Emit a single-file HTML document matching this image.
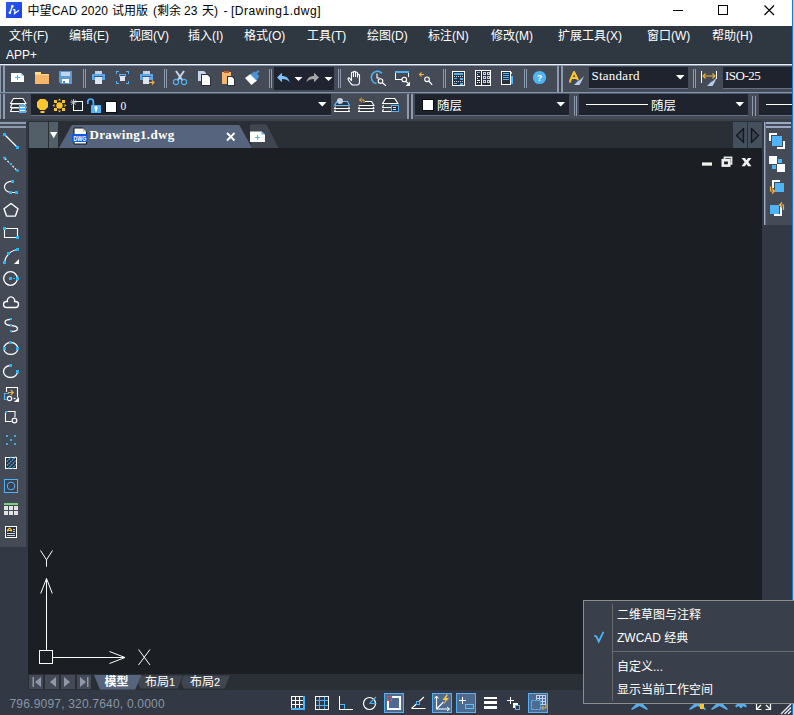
<!DOCTYPE html>
<html lang="zh-CN">
<head>
<meta charset="utf-8">
<title>中望CAD 2020</title>
<style>
html,body{margin:0;padding:0;}
body{width:794px;height:715px;overflow:hidden;position:relative;background:#323944;
 font-family:"Liberation Sans","Noto Sans CJK SC",sans-serif;font-size:12px;color:#fff;}
.a{position:absolute;}
.t{position:absolute;white-space:nowrap;line-height:16px;height:16px;}
svg{position:absolute;overflow:visible;}
#title{left:0;top:0;width:792px;height:26px;background:#fff;}
#title .t{color:#000;top:3px;font-size:12px;}
#menu{left:0;top:26px;width:792px;height:38px;background:#2f3841;}
#menu .t{color:#fff;font-size:12px;}
#tb1,#tb2{left:0;width:792px;height:26px;background:#444b57;}
#tb1{top:66px;}
#tb2{top:94px;height:25px;}
.grip{position:absolute;background:#8d9bb0;}
.sep{position:absolute;width:1px;background:#8d9bb0;top:3px;height:19px;}
.dd{position:absolute;background:#1f232d;border-bottom:1px solid #667283;}
.mono{font-family:"Liberation Serif","Noto Sans CJK SC",serif;}
#draw{left:28px;top:148px;width:734px;height:526px;background:#1b1e23;}
#tabs{left:28px;top:121px;width:734px;height:27px;background:#2a2e35;}
#left{left:0;top:121px;width:26px;height:426px;background:#444b57;}
#right{left:764px;top:122px;width:28px;height:103px;background:#444b57;}
#ltabs{left:28px;top:674px;width:734px;height:16px;background:#2a2e35;}
#status{left:0;top:690px;width:792px;height:25px;background:#323944;}
#popup{left:583px;top:600px;width:211px;height:104px;background:#3a404b;box-sizing:border-box;border:1px solid #8c8c8c;border-right:none;}
#popup .t{color:#fff;font-size:12px;left:33px;}
</style>
</head>
<body>

<!-- window right border -->
<div class="a" style="left:792px;top:0;width:1px;height:715px;background:#1979d6"></div>
<div class="a" style="left:793px;top:0;width:1px;height:715px;background:#d0cac4"></div>

<!-- TITLE BAR -->
<div id="title" class="a">
  <svg style="left:6px;top:2px" width="16" height="16" viewBox="0 0 16 16">
   <defs><linearGradient id="zg" x1="0" y1="0" x2="1" y2="1"><stop offset="0" stop-color="#2a5cf0"/><stop offset="1" stop-color="#1a3fe0"/></linearGradient></defs>
   <rect width="16" height="16" fill="url(#zg)"/>
   <path d="M6.300 4.300l-2.300 6.500" stroke="#fff" stroke-width="1.300" fill="none"/>
   <circle cx="6.300" cy="4.200" r="1.300" fill="#fff"/><circle cx="3.900" cy="10.800" r="1.300" fill="#fff"/>
   <path d="M7 8.200c1-1 2-.8 2 .3l-.5 3.200l4.500-3.500" stroke="#fff" stroke-width="1.200" fill="none"/>
  </svg>
  <div class="t" style="left:27.500px;letter-spacing:.12px">中望CAD 2020</div>
  <div class="t" style="left:112px">试用版</div>
  <div class="t" style="left:153px">(剩余</div>
  <div class="t" style="left:184px">23</div>
  <div class="t" style="left:202px">天)</div>
  <div class="t" style="left:223.500px">-</div>
  <div class="t" style="left:231px;letter-spacing:.52px">[Drawing1.dwg]</div>
  <svg style="left:0;top:0" width="794" height="26" viewBox="0 0 794 26">
   <g stroke="#000" stroke-width="1" fill="none" shape-rendering="crispEdges">
    <path d="M673 10.500h10"/>
    <rect x="718.500" y="5.500" width="9" height="9"/>
   </g>
   <path d="M764.500 5.500l9.500 9.500M774 5.500l-9.500 9.500" stroke="#000" stroke-width="1.200" fill="none"/>
  </svg>
</div>

<!-- MENU BAR -->
<div id="menu" class="a">
  <div class="t" style="left:9px;top:2px">文件(F)</div>
  <div class="t" style="left:69px;top:2px">编辑(E)</div>
  <div class="t" style="left:129px;top:2px">视图(V)</div>
  <div class="t" style="left:188px;top:2px">插入(I)</div>
  <div class="t" style="left:244px;top:2px">格式(O)</div>
  <div class="t" style="left:307px;top:2px">工具(T)</div>
  <div class="t" style="left:367px;top:2px">绘图(D)</div>
  <div class="t" style="left:428px;top:2px">标注(N)</div>
  <div class="t" style="left:491px;top:2px">修改(M)</div>
  <div class="t" style="left:558px;top:2px">扩展工具(X)</div>
  <div class="t" style="left:647px;top:2px">窗口(W)</div>
  <div class="t" style="left:712px;top:2px">帮助(H)</div>
  <div class="t" style="left:6px;top:21px">APP+</div>
</div>
<div class="a" style="left:0;top:63px;width:792px;height:1px;background:#262d36"></div>
<div class="a" style="left:0;top:64px;width:792px;height:1px;background:#eef0f4"></div>
<div class="a" style="left:0;top:65px;width:792px;height:1px;background:#8394ae"></div>

<!-- TOOLBAR ROW 1 -->
<div id="tb1" class="a">
  <div class="grip" style="left:0;top:0;width:1px;height:26px"></div>
  <div class="grip" style="left:3px;top:0;width:2px;height:26px"></div>
  <div class="dd" style="left:589px;top:1px;width:99px;height:21px"></div>
  <div class="dd" style="left:723px;top:1px;width:69px;height:21px"></div>
  <div class="t mono" id="std" style="left:591.500px;top:2px;font-size:13px;letter-spacing:.25px">Standard</div>
  <div class="t mono" id="iso" style="left:725px;top:2px;font-size:13px;letter-spacing:-.5px">ISO-25</div>
</div>
<div class="a" style="left:0;top:92px;width:792px;height:1px;background:#8394ae"></div>
<div class="a" style="left:0;top:93px;width:792px;height:1px;background:#505a69"></div>

<!-- TOOLBAR ROW 2 -->
<div id="tb2" class="a">
  <div class="grip" style="left:0;top:0;width:1px;height:25px"></div>
  <div class="grip" style="left:3px;top:0;width:2px;height:25px"></div>
  <div class="dd" style="left:31px;top:0;width:300px;height:21px"></div>
  <div class="dd" style="left:415px;top:0;width:154px;height:21px"></div>
  <div class="dd" style="left:579px;top:0;width:169px;height:21px"></div>
  <div class="dd" style="left:759px;top:0;width:33px;height:21px"></div>
  <div class="t mono" style="left:120.500px;top:4px;font-size:11.500px">0</div>
  <div class="t" style="left:437px;top:4px;font-size:12.500px">随层</div>
  <div class="t" style="left:651px;top:4px;font-size:12.500px">随层</div>
</div>
<div class="a" style="left:0;top:119px;width:792px;height:3px;background:#3a414b"></div>

<!-- LEFT TOOLBAR -->
<div id="left" class="a">
  <div class="grip" style="left:0;top:1px;width:26px;height:2px"></div>
  <div class="grip" style="left:0;top:5px;width:26px;height:2px"></div>
  <!--LEFTICONS-->
</div>

<!-- DOC TABS -->
<div id="tabs" class="a">
  <!--TABS-->
</div>

<!-- DRAWING AREA -->
<div id="draw" class="a">
  <!--DRAW-->
</div>

<!-- RIGHT TOOLBAR -->
<div id="right" class="a">
  <div class="grip" style="left:0;top:0;width:27px;height:2px;background:#9baac2"></div>
  <div class="grip" style="left:0;top:4px;width:27px;height:2px;background:#9baac2"></div>
  <div class="grip" style="left:0;top:0;width:1px;height:103px;background:#9baac2"></div>
  <div class="grip" style="left:1px;top:0;width:1px;height:103px;background:#66748a"></div>
  <!--RIGHTICONS-->
</div>

<!-- LAYOUT TABS -->
<div id="ltabs" class="a">
  <!--LTABS-->
</div>

<!-- STATUS BAR -->
<div id="status" class="a">
  <div class="t" style="left:9.500px;top:6px;color:#8a95a5;font-size:12px;letter-spacing:.2px">796.9097, 320.7640, 0.0000</div>
  <!--STATUS-->
</div>

<svg class="a" style="left:0;top:0" width="794" height="715" viewBox="0 0 794 715">
<g shape-rendering="crispEdges">
 <!-- separators row1 -->
 <g fill="#8d9bb0">
  <rect x="83" y="69" width="1" height="19"/><rect x="85" y="69" width="1" height="19"/>
  <rect x="164" y="69" width="1" height="19"/><rect x="166" y="69" width="1" height="19"/>
  <rect x="269" y="69" width="1" height="19"/><rect x="271" y="69" width="1" height="19"/>
  <rect x="338" y="69" width="1" height="19"/><rect x="340" y="69" width="1" height="19"/>
  <rect x="443" y="69" width="1" height="19"/><rect x="445" y="69" width="1" height="19"/>
  <rect x="524" y="69" width="1" height="19"/><rect x="526" y="69" width="1" height="19"/>
  <rect x="693" y="69" width="1" height="19"/><rect x="695" y="69" width="1" height="19"/>
  <rect x="557" y="66" width="2" height="26"/><rect x="561" y="66" width="2" height="26"/>
 </g>
 <rect x="559" y="66" width="2" height="26" fill="#3a414b"/>
 <!-- new -->
 <path d="M11 73h10l3 3v6h-13z" fill="#fff" shape-rendering="geometricPrecision"/>
 <path d="M21.500 73.200l2.300 2.300h-2.300z" fill="#6cbcf5" shape-rendering="geometricPrecision"/>
 <rect x="15" y="77" width="5" height="1" fill="#4fb3f7"/><rect x="17" y="75" width="1" height="5" fill="#4fb3f7"/>
 <!-- open -->
 <rect x="35" y="72" width="6" height="3" fill="#fbe08f"/>
 <rect x="35" y="74" width="14" height="10" fill="#f6b66b"/>
 <rect x="35" y="74" width="14" height="1" fill="#fbd78e"/>
 <!-- save -->
 <path d="M59 71h13v13h-11l-2-2z" fill="#5b9bd5" shape-rendering="geometricPrecision"/>
 <rect x="61" y="72" width="9" height="4" fill="#c5d3e8"/>
 <rect x="62" y="79" width="7" height="4" fill="#fff"/>
 <rect x="63" y="81" width="2" height="2" fill="#4a86c8"/>
 <!-- print -->
 <rect x="95" y="71" width="7" height="3" fill="#c9d2e4"/>
 <rect x="92" y="74" width="13" height="6" fill="#5ba7ea"/>
 <rect x="94" y="76" width="9" height="1" fill="#2e5d96"/>
 <rect x="95" y="77" width="7" height="7" fill="#dde5f5"/>
 <!-- preview -->
 <g fill="#5ab0f0">
  <rect x="116" y="71" width="3" height="1"/><rect x="116" y="71" width="1" height="3"/>
  <rect x="126" y="71" width="3" height="1"/><rect x="128" y="71" width="1" height="3"/>
  <rect x="116" y="83" width="3" height="1"/><rect x="116" y="81" width="1" height="3"/>
  <rect x="126" y="83" width="3" height="1"/><rect x="128" y="81" width="1" height="3"/>
 </g>
 <rect x="119" y="74" width="7" height="3" fill="#5ba7ea"/>
 <rect x="120" y="75" width="5" height="1" fill="#2e5d96"/>
 <rect x="120" y="76" width="5" height="5" fill="#dde5f5"/>
 <!-- plot -->
 <rect x="143" y="71" width="7" height="3" fill="#c9d2e4"/>
 <rect x="140" y="74" width="13" height="6" fill="#5ba7ea"/>
 <rect x="142" y="76" width="9" height="1" fill="#2e5d96"/>
 <rect x="143" y="77" width="6" height="7" fill="#dde5f5"/>
 <rect x="149" y="80" width="5" height="5" fill="#444b57"/>
</g>
 <path d="M149 82.5h5M152 80.5l2 2l-2 2" stroke="#f3b13e" stroke-width="1.1" fill="none"/>
 <!-- cut -->
 <path d="M176 71l6.5 9.5M184 71l-6.5 9.5" stroke="#c5d4ea" stroke-width="2" fill="none"/>
 <circle cx="176" cy="82" r="2.6" stroke="#4fb3f7" stroke-width="1.1" fill="none"/>
 <circle cx="184" cy="82" r="2.6" stroke="#4fb3f7" stroke-width="1.1" fill="none"/>
 <!-- copy -->
 <path d="M198 71h6l2 2v8h-8z" fill="#c5d4ea"/>
 <path d="M201 74h7l3 3v9h-10z" fill="#2b313b"/>
 <path d="M202 75h5.5l2.5 2.5v7.500h-8z" fill="#fff"/>
 <path d="M207.500 75l2.500 2.500h-2.500z" fill="#dfe6f3"/>
 <!-- paste -->
 <rect x="222" y="72" width="9" height="12" fill="#f6b66b" shape-rendering="crispEdges"/>
 <rect x="224" y="71" width="5" height="2" fill="#b5652a" shape-rendering="crispEdges"/>
 <path d="M227 76h5.500l2.500 2.500v7.500h-8z" fill="#2b313b"/>
 <path d="M228 77h4l2 2v6h-6z" fill="#fff"/>
 <!-- brush -->
 <path d="M245 78l5.500-4l6.500 6.500l-5.500 4.500z" fill="#fff"/>
 <path d="M250.300 74.300l4.200-3l4.800 5l-2.800 4.200z" fill="#4f92d4"/>
 <path d="M256 73.500l2.800-2.800" stroke="#4f92d4" stroke-width="2" fill="none"/>
 <!-- undo/redo block -->
 <rect x="274" y="67" width="60" height="23" fill="#1f2430" shape-rendering="crispEdges"/>
 <path d="M277 77.500l5-4.800v3.300c4 0 7 2 7.500 6.200c-1.500-2.200-4-3.200-7.500-3.200v3.300z" fill="#7dc4ff"/>
 <path d="M294.500 77h8l-4 4z" fill="#fff"/>
 <path d="M319 77.500l-5-4.800v3.300c-4 0-7 2-7.500 6.200c1.500-2.200 4-3.200 7.500-3.200v3.300z" fill="#a8a8a8"/>
 <path d="M324.500 77h8l-4 4z" fill="#fff"/>
 <!-- pan hand -->
 <path d="M351.500 80.500l-2-2.300q-1.200-.9-1.500.4q0 .9 1 2.400l2.500 3.300q.8.700 2 .700h3.500q2.500 0 2.500-3.500v-6q0-1.200-1-1.200t-1 1.200v-2.500q0-1-1-1t-1 1v-.700q0-1-1-1t-1 1v.700q0-1-1-1t-1 1z" stroke="#fff" stroke-width="1.150" fill="none" stroke-linejoin="round"/>
 <path d="M353.500 73v4M355.500 73v4M357.500 75.500v2" stroke="#fff" stroke-width="1" fill="none"/>
 <!-- zoom realtime -->
 <path d="M382 73.300a6.200 6.200 0 1 0 -5.500 10.300" stroke="#4fb3f7" stroke-width="1.600" fill="none"/>
 <path d="M377 73.500v4.500h2.500" stroke="#fff" stroke-width="1.100" fill="none"/>
 <circle cx="380.500" cy="81" r="2.300" stroke="#fff" stroke-width="1.100" fill="#444b57"/>
 <path d="M382.300 82.800l3.700 3" stroke="#fff" stroke-width="1.200" fill="none"/>
 <!-- zoom window -->
 <rect x="395" y="71" width="14" height="2" fill="#4fb3f7" shape-rendering="crispEdges"/>
 <path d="M395.500 73v6.500h6M408.500 73v4" stroke="#fff" stroke-width="1" fill="none" shape-rendering="crispEdges"/>
 <circle cx="404.300" cy="79.500" r="2.300" stroke="#fff" stroke-width="1.100" fill="#444b57"/>
 <path d="M406 81.300l2 2" stroke="#fff" stroke-width="1.200" fill="none"/>
 <path d="M410 81.500v4.500h-4.500z" fill="#fff"/>
 <!-- zoom prev -->
 <path d="M419.500 74.500h4.500M421.500 72.500l-2 2l2 2" stroke="#f3b13e" stroke-width="1.100" fill="none"/>
 <circle cx="427" cy="79.300" r="2.300" stroke="#fff" stroke-width="1.100" fill="none"/>
 <path d="M428.800 81l3.400 3.800" stroke="#fff" stroke-width="1.200" fill="none"/>
<g shape-rendering="crispEdges">
 <!-- properties -->
 <rect x="452.500" y="71.500" width="12" height="14" fill="#2b313b" stroke="#fff" stroke-width="1"/>
 <rect x="454" y="73" width="9" height="2" fill="#4fb3f7"/>
 <g fill="#c5d4ea"><rect x="454" y="76" width="1" height="1"/><rect x="456" y="76" width="1" height="1"/><rect x="458" y="76" width="1" height="1"/><rect x="460" y="76" width="1" height="1"/><rect x="462" y="76" width="1" height="1"/>
 <rect x="454" y="81" width="1" height="1"/><rect x="456" y="81" width="1" height="1"/><rect x="458" y="81" width="1" height="1"/><rect x="460" y="81" width="1" height="1"/><rect x="462" y="81" width="1" height="1"/></g>
 <rect x="454" y="78" width="3" height="1" fill="#4fb3f7"/><rect x="460" y="78" width="3" height="2" fill="#4fb3f7"/>
 <rect x="454" y="83" width="3" height="1" fill="#4fb3f7"/><rect x="460" y="83" width="3" height="2" fill="#4fb3f7"/>
 <!-- design center -->
 <rect x="475.500" y="70.500" width="15" height="15" fill="#2b313b" stroke="#fff" stroke-width="1"/>
 <rect x="481" y="71" width="1" height="14" fill="#fff"/>
 <rect x="477" y="72" width="3" height="1" fill="#4fb3f7"/>
 <g fill="#fff"><rect x="477" y="74" width="1" height="1"/><rect x="477" y="76" width="3" height="1"/><rect x="477" y="78" width="1" height="1"/><rect x="477" y="80" width="3" height="1"/><rect x="477" y="82" width="1" height="1"/><rect x="479" y="82" width="1" height="1"/></g>
 <g fill="#c5d4ea"><rect x="483" y="72" width="3" height="3"/><rect x="487" y="72" width="3" height="3"/><rect x="483" y="76" width="3" height="3"/><rect x="487" y="76" width="3" height="3"/><rect x="483" y="80" width="3" height="3"/><rect x="487" y="80" width="3" height="3"/></g>
 <g fill="#2b313b"><rect x="484" y="73" width="1" height="1"/><rect x="488" y="73" width="1" height="1"/><rect x="484" y="77" width="1" height="1"/><rect x="488" y="77" width="1" height="1"/><rect x="484" y="81" width="1" height="1"/><rect x="488" y="81" width="1" height="1"/></g>
 <!-- tool palettes -->
 <rect x="501.500" y="71.500" width="9" height="13" fill="#2b313b" stroke="#fff" stroke-width="1"/>
 <rect x="503" y="73" width="6" height="1" fill="#4fb3f7"/><rect x="503" y="75" width="6" height="1" fill="#4fb3f7"/><rect x="503" y="77" width="6" height="1" fill="#4fb3f7"/><rect x="503" y="79" width="6" height="1" fill="#4fb3f7"/>
 <rect x="511" y="76" width="2" height="8" fill="#4fb3f7"/>
 <rect x="511" y="72" width="1" height="2" fill="#c5d4ea"/>
</g>
 <!-- help -->
 <circle cx="539.500" cy="77.500" r="6.600" fill="#4fb3f7"/>
 <text x="539.500" y="81" font-family="Liberation Sans, sans-serif" font-size="9" font-weight="bold" fill="#fff" text-anchor="middle">?</text>
 <!-- text style -->
 <path d="M570 82.500l.3-2l3.700-8.500l4 8M571.500 78h6" stroke="#fdc62f" stroke-width="2" fill="none" stroke-linejoin="round"/>
 <path d="M584 76l-3.500 3.500l-2.500 1.500l-4 4h5.500l2-3.500z" fill="#b5cbe8"/>
 <!-- dim style -->
 <rect x="701" y="71" width="1" height="12" fill="#fff" shape-rendering="crispEdges"/>
 <rect x="716" y="71" width="1" height="8" fill="#fff" shape-rendering="crispEdges"/>
 <path d="M703 76h12M705.500 73.500l-2.500 2.500l2.500 2.500M712.500 73.500l2.500 2.500l-2.500 2.500" stroke="#f3b13e" stroke-width="1.100" fill="none"/>
 <path d="M717 77l-3.500 3.500l-2.500 1.500l-4 4h5.500l2-3.500z" fill="#b5cbe8"/>
</svg>

<svg class="a" style="left:0;top:0" width="794" height="715" viewBox="0 0 794 715">
<g shape-rendering="crispEdges" fill="#8d9bb0">
  <rect x="407" y="94" width="2" height="25"/><rect x="411" y="94" width="2" height="25"/>
  <rect x="574" y="96" width="1" height="20"/><rect x="576" y="96" width="1" height="20"/>
  <rect x="752" y="96" width="1" height="20"/><rect x="755" y="96" width="1" height="20"/>
</g>
<rect x="409" y="94" width="2" height="25" fill="#3a414b" shape-rendering="crispEdges"/>
<!-- layer manager -->
<g stroke="#fff" stroke-width="1.100" fill="#2b313b" stroke-linejoin="round">
 <path d="M10.500 111.500h15.500l-1.500-3.500h-12.500z"/>
 <path d="M10.500 107.500h15.500l-1.500-3.500h-12.500z"/>
 <path d="M10.500 103.500h15.500l-3-5h-9.500z"/>
</g>
<g shape-rendering="crispEdges">
 <rect x="19" y="105" width="7" height="8" fill="#4fb3f7"/>
 <rect x="20" y="107" width="5" height="1" fill="#fff"/><rect x="20" y="110" width="5" height="1" fill="#fff"/>
</g>
<!-- bulb -->
<path d="M40 99h5l3 3v5l-3 3h-5l-3-3v-5z" fill="#fdc62f"/>
<rect x="40.500" y="111" width="4" height="2" fill="#fdc62f"/>
<!-- sun -->
<g fill="#fdc62f">
 <circle cx="59.500" cy="105.500" r="3.200"/>
 <g shape-rendering="crispEdges"><rect x="54" y="100" width="3" height="3"/><rect x="62" y="100" width="3" height="3"/><rect x="54" y="108" width="3" height="3"/><rect x="62" y="108" width="3" height="3"/></g>
 <path d="M58 100.500h3l-1.500-2zM58 110.500h3l-1.500 2zM54.500 104v3l-2-1.500zM64.500 104v3l2-1.500z"/>
</g>
<!-- freeze vp -->
<rect x="73.500" y="101.500" width="9" height="9" fill="none" stroke="#fff" stroke-width="1" shape-rendering="crispEdges"/>
<path d="M73.500 99v6.500M70.300 102.200h6.400M71.200 100l4.600 4.600M75.800 100l-4.600 4.600" stroke="#c8ccd4" stroke-width=".9" fill="none"/>
<!-- lock -->
<path d="M87.800 104v-2.200a2.800 2.800 0 0 1 5.600 0v3.500" stroke="#4fb3f7" stroke-width="1.700" fill="none"/>
<rect x="91" y="105" width="10" height="8" fill="#4fb3f7" shape-rendering="crispEdges"/>
<circle cx="96" cy="107.800" r="1.700" fill="#fff"/><rect x="95.100" y="108" width="1.800" height="3.500" fill="#fff"/>
<!-- color swatch -->
<rect x="105" y="101" width="12" height="12" fill="#0c0d10" shape-rendering="crispEdges"/>
<rect x="106" y="102" width="10" height="10" fill="#fff" shape-rendering="crispEdges"/>
<!-- dd triangles -->
<path d="M318 102h8.500l-4.250 4.500z" fill="#fff"/>
<path d="M556.500 102h8.500l-4.250 4.500z" fill="#fff"/>
<path d="M735.500 102h8.500l-4.250 4.500z" fill="#fff"/>
<path d="M676 75h8.500l-4.250 4.500z" fill="#fff"/>
<!-- layer icons -->
<g fill="#2f353f" stroke-width="1.100" stroke-linejoin="round">
 <path d="M335.500 109.800l-1 1.700h15l-1-1.700" stroke="#fff"/>
 <path d="M335.500 106.800l-1 1.700h15l-1-1.700" stroke="#fff"/>
 <path d="M334.500 105.500l2.500-4h10.500l2 4z" stroke="#6cbcf5" stroke-width="1.200"/>
 <path d="M359.500 109.800l-1 1.700h15.500l-1-1.700" stroke="#fff"/>
 <path d="M359.500 106.800l-1 1.700h15.500l-1-1.700" stroke="#fff"/>
 <path d="M365 101.500h6.500l2.500 4h-15.500" stroke="#fff"/>
 <path d="M364 103v-3h-4.500M361.800 97.800l-2.300 2.200l2.300 2.200" stroke="#f3b13e" stroke-width=".950" fill="none"/>
 <path d="M383.500 109l-1 2.500h9" stroke="#fff"/>
 <path d="M383.500 105l-1 2.500h9" stroke="#fff"/>
 <path d="M382.500 103.500l3.200-5h9l3.200 5z" stroke="#fff" stroke-width="1.200"/>
</g>
<circle cx="340" cy="101" r="3" fill="#c8d0e2"/>
<g shape-rendering="crispEdges">
 <rect x="391" y="105" width="8" height="7" fill="#4fb3f7"/><rect x="392" y="106" width="6" height="5" fill="#2b313b"/>
 <rect x="393" y="107" width="3" height="1" fill="#bfe3ff"/><rect x="393" y="109" width="3" height="1" fill="#bfe3ff"/>
 <!-- color swatch 2 -->
 <rect x="422" y="99" width="12" height="12" fill="#0c0d10"/><rect x="423" y="100" width="10" height="10" fill="#fff"/>
 <!-- linetype lines -->
 <rect x="586" y="104" width="62" height="1" fill="#fff"/>
 <rect x="766" y="104" width="26" height="1" fill="#fff"/>
</g>
</svg>

<svg class="a" style="left:0;top:0" width="794" height="715" viewBox="0 0 794 715">
<g fill="none" stroke="#fff" stroke-width="1.200">
 <!-- line -->
 <path d="M5 135l12.500 12.500"/>
 <!-- xline -->
 <path d="M5 158.500l12 12" stroke-dasharray="2 1.500"/>
 <!-- pline -->
 <path d="M12.500 181.500a7 5.500 0 0 0 -2 11h6.500"/>
 <!-- polygon -->
 <path d="M11 203.500l7 5.200l-2.600 7.400h-8.800l-2.600-7.400z" stroke-width="1.400" stroke-linejoin="round"/>
 <!-- rect -->
 <path d="M4.500 228.500h13v9h-13z" stroke-width="1.100"/>
 <!-- arc -->
 <path d="M4.500 262.500c1-6 5-11.500 13-13"/>
 <!-- circle -->
 <circle cx="10.500" cy="278.500" r="6.800" stroke-width="1.300"/>
 <!-- cloud -->
 <path d="M6.500 307.500h9a3 3 0 0 0 0-6h-.900a3.700 3.700 0 1 0 -7.200 0h-.900a3 3 0 0 0 0 6z" stroke-width="1.300"/>
 <!-- spline -->
 <path d="M11 319.300c-3 0-6 1-6 3s3 3 6 3.200s6.500 1.200 6.500 3.200s-3.500 2.800-6.500 2.800" stroke-width="1.300"/>
 <!-- ellipse -->
 <ellipse cx="10.800" cy="348.400" rx="7" ry="6" stroke-width="1.300"/>
 <!-- ellipse arc -->
 <path d="M10.500 365.500a7 6 0 1 0 7 6" stroke-width="1.300"/>
 <!-- insert block -->
 <path d="M6.500 392v-4.500h11v10" stroke-width="1.100"/>
 <circle cx="9.500" cy="398.500" r="2.200" stroke-width="1.200"/>
 <path d="M13.500 398.500h2" stroke-width="1.200"/>
 <path d="M9 393.500h-4.500v6h2" stroke="#4fb3f7"/>
 <path d="M8 392.500h5M10.800 390l2.500 2.500l-2.500 2.500" stroke="#f3b13e" stroke-width="1.100"/>
 <!-- make block -->
 <path d="M7.500 411.500h7.500v5.500M5.500 413v8.500h6" stroke-width="1.100"/>
 <circle cx="14.500" cy="420.500" r="2.300" stroke-width="1.200"/>
</g>
<path d="M19 397v5h-5z" fill="#fff"/>
<path d="M19 259v5h-5z" fill="#fff"/>
<g fill="#29b6f6" shape-rendering="crispEdges">
 <rect x="3" y="133" width="3" height="3"/><rect x="16" y="146" width="3" height="3"/>
 <rect x="10" y="163" width="2" height="2"/>
 <rect x="11" y="180" width="3" height="3"/><rect x="9" y="191" width="3" height="3"/><rect x="15" y="191" width="3" height="3"/>
 <rect x="3" y="227" width="3" height="3"/><rect x="16" y="236" width="3" height="3"/>
 <rect x="16" y="248" width="3" height="3"/><rect x="7" y="252" width="3" height="3"/><rect x="3" y="261" width="3" height="3"/>
 <rect x="9" y="277" width="3" height="3"/><rect x="16" y="277" width="3" height="3"/><rect x="13" y="278" width="2" height="1"/>
 <rect x="10" y="318" width="2" height="2"/><rect x="10" y="324" width="2" height="2"/><rect x="10" y="330" width="2" height="2"/>
 <rect x="9" y="341" width="3" height="3"/><rect x="3" y="347" width="3" height="3"/><rect x="16" y="347" width="3" height="3"/>
 <rect x="9" y="364" width="3" height="3"/><rect x="16" y="370" width="3" height="3"/>
 <rect x="5" y="411" width="2" height="2"/>
 <rect x="6" y="435" width="2" height="2"/><rect x="14" y="435" width="2" height="2"/><rect x="10" y="439" width="2" height="2"/><rect x="6" y="443" width="2" height="2"/><rect x="14" y="443" width="2" height="2"/>
</g>
<path d="M3 156.500l3.600.800l-2.800 2.800zM19 172l-3.600-.800l2.800-2.800z" fill="#29b6f6"/>
<!-- hatch -->
<rect x="5.500" y="457.500" width="11" height="11" fill="#2b313b" stroke="#fff" stroke-width="1" shape-rendering="crispEdges"/>
<path d="M7 462l5-5M7 466l9-9M8 469l8-8M12 469l4-4" stroke="#4fb3f7" stroke-width="1.100" stroke-dasharray="1.600 .700" fill="none" transform="translate(0,-.5)"/>
<!-- region -->
<rect x="4.500" y="479.500" width="13" height="13" fill="#3b424d" stroke="#4fb3f7" stroke-width="1" shape-rendering="crispEdges"/>
<circle cx="11" cy="486" r="3.700" fill="none" stroke="#4fb3f7" stroke-width="1.100"/>
<!-- table -->
<g shape-rendering="crispEdges">
 <rect x="4" y="503" width="14" height="2" fill="#7ccf7c"/>
 <g fill="#e2e2e2"><rect x="4" y="506" width="4" height="4"/><rect x="9" y="506" width="4" height="4"/><rect x="14" y="506" width="4" height="4"/><rect x="4" y="511" width="4" height="4"/><rect x="9" y="511" width="4" height="4"/><rect x="14" y="511" width="4" height="4"/></g>
 <!-- mtext -->
 <rect x="5.500" y="526.500" width="11" height="11" fill="#2b313b" stroke="#fff" stroke-width="1"/>
 <rect x="13" y="529" width="2" height="1" fill="#c5d4ea"/><rect x="13" y="531" width="2" height="1" fill="#c5d4ea"/>
 <rect x="7" y="533" width="8" height="1" fill="#c5d4ea"/><rect x="7" y="535" width="8" height="1" fill="#c5d4ea"/>
</g>
<path d="M7.500 531.500v-1.500l2-2l2 2v1.500M8 530.500h3" stroke="#fdc62f" stroke-width="1.100" fill="none"/>
</svg>

<svg class="a" style="left:0;top:0" width="794" height="715" viewBox="0 0 794 715">
<g shape-rendering="crispEdges">
 <rect x="29" y="122" width="19" height="26" fill="#525e68"/>
 <rect x="49" y="122" width="9" height="26" fill="#525e68"/>
 <rect x="733" y="122" width="14" height="26" fill="#45505e"/>
 <rect x="748" y="122" width="14" height="26" fill="#45505e"/>
</g>
<path d="M50 132h7.400l-3.700 6.200z" fill="#fff"/>
<!-- plus tab -->
<path d="M249.800 126.500q-.2-2.200 2-2.200h13.200q1.500 0 2.300 1.500l11.200 22.200h-27z" fill="#3f4650"/>
<!-- active tab -->
<path d="M59 148l12.500-22.500q.3-.5 1-.5h166q.8 0 1.200.6l12.300 22.400z" fill="#56657d"/>
<!-- plus tab -->

<!-- dwg icon -->
<path d="M74 128h9l3.500 3.500v12.500h-12.500z" fill="#fff" stroke="#15171b" stroke-width="1"/>
<path d="M83 128v3.500h3.500z" fill="#c8c8c8"/>
<rect x="72" y="134" width="16" height="8" fill="#0f5be0" shape-rendering="crispEdges"/>
<text x="80" y="140.600" font-family="Liberation Sans, sans-serif" font-size="6.500" font-weight="bold" fill="#fff" text-anchor="middle" textLength="13" lengthAdjust="spacingAndGlyphs">DWG</text>
<!-- close x -->
<path d="M227 133l7.500 7.500M234.500 133l-7.500 7.500" stroke="#fff" stroke-width="1.800" fill="none"/>
<!-- plus icon -->
<path d="M250 131.500h11.500l3.500 3v7.500h-15z" fill="#fff"/>
<path d="M261.500 131.500l3.500 3h-3.500z" fill="#4fb3f7"/>
<path d="M255 137.500h5M257.500 135v5" stroke="#4fb3f7" stroke-width="1" fill="none" shape-rendering="crispEdges"/>
<!-- scroll arrows -->
<path d="M743.500 128.500v14l-7-7z" fill="#3d4450" stroke="#14171b" stroke-width="1.400" stroke-linejoin="round"/>
<path d="M751.500 128.500v14l7-7z" fill="#3d4450" stroke="#14171b" stroke-width="1.400" stroke-linejoin="round"/>
<!-- mdi controls -->
<g shape-rendering="crispEdges">
 <rect x="702" y="162" width="10" height="1" fill="#9a9a9a"/><rect x="702" y="163" width="10" height="2" fill="#f2f2f2"/><rect x="702" y="165" width="10" height="1" fill="#a8a8a8"/>
</g>
<path d="M724.500 159v-1.600h7v6.500h-1.500" stroke="#e2e2e2" stroke-width="1.800" fill="none"/>
<rect x="722.800" y="160.200" width="6.400" height="5.400" stroke="#efefef" stroke-width="2.600" fill="none"/>
<path d="M741.500 158h3.500l1.500 2.300l1.500-2.300h3.500l-3.200 4l3.200 4.300h-3.500l-1.500-2.300l-1.500 2.300h-3.500l3.200-4.300z" fill="#f0f0f0"/>
</svg>

<svg class="a" style="left:0;top:0" width="794" height="715" viewBox="0 0 794 715">
<g stroke="#fff" stroke-width="1" fill="none">
 <path d="M46.500 578.500v72M46.500 578.500l-5.800 15M46.500 578.500l5.800 15" />
 <rect x="39.500" y="650.500" width="13" height="13" shape-rendering="crispEdges"/>
 <path d="M53 657.500h72M125 657.500l-15.500-6M125 657.500l-15.500 6"/>
 <path d="M40.500 550.500l6 9.300l6-9.300M46.500 559.800v7"/>
 <path d="M138.500 649.500l11.500 15.500M150 649.500l-11.500 15.500"/>
</g>
</svg>

<svg class="a" style="left:0;top:0" width="794" height="715" viewBox="0 0 794 715">
<g shape-rendering="crispEdges">
 <!-- 1: bring to front -->
 <rect x="769" y="133" width="8" height="8" fill="#fff"/><rect x="777" y="141" width="8" height="8" fill="#fff"/><rect x="771" y="135" width="12" height="12" fill="#444b57"/>
 <rect x="772" y="136" width="10" height="10" fill="#4fb3f7"/>
 <!-- 2: send to back -->
 <rect x="769" y="156" width="8" height="8" fill="#fff"/><rect x="777" y="164" width="8" height="8" fill="#fff"/>
 <rect x="778" y="159" width="4" height="4" fill="#4fb3f7"/><rect x="772" y="165" width="4" height="4" fill="#4fb3f7"/>
 <!-- 3: bring above -->
 <path d="M772 180h8v2h-6v6h-2z" fill="#fff"/>
 <rect x="775" y="183" width="9" height="9" fill="#4fb3f7"/>
 <!-- 4: send under -->
 <path d="M782 207v9h-8v-2h6v-7z" fill="#fff"/>
 <rect x="770" y="205" width="9" height="9" fill="#4fb3f7"/>
</g>
<path d="M770.500 186.500v4.500h3.500M772 188.500l2.500 2.500l-2.500 2.500" stroke="#f3b13e" stroke-width="1.200" fill="none"/>
<path d="M783.500 210v-5h-3.500M782 202.500l-2.500 2.500l2.500 2.500" stroke="#f3b13e" stroke-width="1.200" fill="none"/>
</svg>

<svg class="a" style="left:0;top:0" width="794" height="715" viewBox="0 0 794 715">
<!-- layout nav buttons -->
<g shape-rendering="crispEdges" fill="#444b57">
 <rect x="29" y="675" width="14" height="14"/><rect x="45" y="675" width="14" height="14"/><rect x="61" y="675" width="14" height="14"/><rect x="77" y="675" width="14" height="14"/>
</g>
<g fill="#8e98a8">
 <rect x="32.500" y="677" width="1.500" height="10"/><path d="M41 677v10l-6-5z"/>
 <path d="M56 677v10l-6-5z"/>
 <path d="M64 677v10l6-5z"/>
 <path d="M80 677v10l6-5z"/><rect x="87" y="677" width="1.500" height="10"/>
</g>
<!-- layout tabs -->
<path d="M177.500 675h53l-5.500 14h-41.500z" fill="#3f4650" stroke="#2a2e35" stroke-width="1"/>
<path d="M134 675h49.500l-5.500 14h-38z" fill="#3f4650" stroke="#2a2e35" stroke-width="1"/>
<path d="M94 675h47.300l-6 14.500h-35.300z" fill="#56657d"/>
<!-- status icons -->
<g shape-rendering="crispEdges">
 <!-- snap -->
 <g fill="#fff"><rect x="291" y="696" width="13" height="1"/><rect x="291" y="700" width="13" height="1"/><rect x="291" y="704" width="13" height="1"/>
 <rect x="291" y="696" width="1" height="13"/><rect x="295" y="696" width="1" height="13"/><rect x="299" y="696" width="1" height="13"/></g>
 <rect x="303" y="696" width="2" height="14" fill="#4fb3f7"/><rect x="291" y="708" width="14" height="2" fill="#4fb3f7"/>
 <!-- grid -->
 <g fill="#4fb3f7"><rect x="319" y="696" width="1" height="14"/><rect x="324" y="696" width="1" height="14"/><rect x="315" y="700" width="14" height="1"/><rect x="315" y="705" width="14" height="1"/></g>
 <rect x="315.500" y="696.500" width="13" height="13" fill="none" stroke="#fff" stroke-width="1"/>
 <!-- ortho -->
 <path d="M339.500 696v13h13" stroke="#fff" stroke-width="1" fill="none"/>
 <path d="M340 704.500h4.500v4.500" stroke="#4fb3f7" stroke-width="1" fill="none"/>
</g>
<!-- polar -->
<circle cx="369.500" cy="703.500" r="6" stroke="#fff" stroke-width="1.200" fill="none"/>
<path d="M369.500 703.500h7M369.500 703.500l6.500-6.500" stroke="#4fb3f7" stroke-width="1.100" fill="none"/>
<!-- active boxes -->
<g shape-rendering="crispEdges" fill="#4d6a90" stroke="#5aaeee" stroke-width="1">
 <rect x="384.500" y="693.500" width="19" height="19"/>
 <rect x="432.500" y="693.500" width="19" height="19"/>
 <rect x="456.500" y="693.500" width="19" height="19"/>
 <rect x="528.500" y="693.500" width="19" height="19"/>
</g>
<g shape-rendering="crispEdges">
 <!-- osnap -->
 <rect x="388" y="697" width="12" height="12" fill="none" stroke="#fff" stroke-width="2"/>
 <rect x="387.500" y="696.500" width="4" height="4" fill="#4d6a90" stroke="#ff4040" stroke-width="1"/>
</g>
<!-- otrack -->
<path d="M411.500 708.500h14M411.500 708.500l12.500-11.500" stroke="#fff" stroke-width="1.100" fill="none"/>
<rect x="416.500" y="701.500" width="3" height="3" fill="#323944" stroke="#4fb3f7" stroke-width="1" shape-rendering="crispEdges"/>
<!-- ducs -->
<path d="M436.500 696v13h13M436.500 709l7-7" stroke="#fff" stroke-width="1.100" fill="none"/>
<path d="M434.500 698.500l2-2.500l2 2.500M447 707l2.500 2l-2.500 2" stroke="#fff" stroke-width="1" fill="none"/>
<path d="M446.500 694.500l-4 5.500h3l-2 4.500l5.500-6.500h-3l2-3.500z" fill="#fdc62f"/>
<!-- dyn -->
<path d="M459 700.500h7M462.500 697v7" stroke="#fff" stroke-width="1.200" fill="none" shape-rendering="crispEdges"/>
<rect x="465.500" y="704.500" width="8" height="4" fill="none" stroke="#5cc0ff" stroke-width="1.200" shape-rendering="crispEdges"/>
<!-- lwt -->
<g shape-rendering="crispEdges" fill="#fff"><rect x="484" y="697" width="13" height="2"/><rect x="484" y="701" width="13" height="3"/><rect x="484" y="706" width="13" height="3"/></g>
<!-- sel cycling -->
<path d="M507 700.500h7M510.500 697v7" stroke="#fff" stroke-width="1.200" fill="none" shape-rendering="crispEdges"/>
<g shape-rendering="crispEdges"><rect x="513" y="703" width="5" height="5" fill="#fff"/><rect x="515.500" y="705.500" width="4" height="4" fill="#323944" stroke="#4fb3f7" stroke-width="1"/></g>
<!-- model -->
<g shape-rendering="crispEdges">
 <g fill="#c5d4ea"><rect x="536" y="695" width="10" height="1"/><rect x="536" y="698" width="10" height="1"/><rect x="536" y="701" width="10" height="1"/><rect x="536" y="704" width="10" height="1"/>
 <rect x="536" y="695" width="1" height="10"/><rect x="539" y="695" width="1" height="10"/><rect x="542" y="695" width="1" height="10"/><rect x="545" y="695" width="1" height="10"/></g>
 <rect x="531" y="700" width="10" height="10" fill="#4d6a90"/>
</g>
<rect x="531.500" y="700.500" width="9" height="9" fill="none" stroke="#5cc0ff" stroke-width="1.200" stroke-dasharray="2 1"/>
<path d="M546 704v4h-4M543.500 706l-2 2l2 2" stroke="#f3b13e" stroke-width="1" fill="none"/>
<!-- right side status icons (partially hidden by popup) -->
<g fill="#5aaeee">
 <path d="M631 709l6-6h5l6 6l-1 1l-7.500-4l-7.500 4z"/>
 <path d="M689 709l6-6h5l6 6l-1 1l-7.500-4l-7.500 4z"/>
 <path d="M711 709l6-6h5l6 6l-1 1l-7.500-4l-7.500 4z"/>
 <path d="M735 706l2-2h8l2 2l-1.500 1.500l-2-1.500l-2.500 2.500l-2.500-2.500l-2 1.500z"/>
</g>
<rect x="700" y="704" width="4" height="5" fill="#fdc62f"/>
<path d="M756.500 704v5.500h5M770.500 704v5.500h-5M757 709l4-4M770 709l-4-4" stroke="#fff" stroke-width="1.200" fill="none"/>
<path d="M781 714l10-10M784.500 714l6.500-6.500M788 714l3-3" stroke="#e8e8e8" stroke-width="1.400" fill="none"/>
</svg>


<div class="t mono" id="tabtxt" style="left:89.500px;top:127px;font-size:13px;font-weight:bold;letter-spacing:.31px">Drawing1.dwg</div>
<div class="t" style="left:104.500px;top:674px;font-size:12px;font-weight:bold">模型</div>
<div class="t" style="left:145px;top:674px;font-size:12px">布局<span style="font-size:11px">1</span></div>
<div class="t" style="left:190px;top:674px;font-size:12px">布局<span style="font-size:11px">2</span></div>
<!--TEXTOVER-->

<!-- POPUP MENU -->
<div id="popup" class="a">
  <div class="a" style="left:28px;top:3px;width:1px;height:97px;background:#6a6a6a"></div>
  <div class="a" style="left:29px;top:50px;width:182px;height:1px;background:#6a6a6a"></div>
  <div class="t" style="top:6px">二维草图与注释</div>
  <div class="t" style="top:29px">ZWCAD 经典</div>
  <div class="t" style="top:58px">自定义...</div>
  <div class="t" style="top:81px">显示当前工作空间</div>
  <svg style="left:0;top:0" width="211" height="104" viewBox="583 600 211 104"><path d="M593.300 634.500l2.200 1.200l2.200 5l4.800-9.800" stroke="#4fb3f7" stroke-width="1.800" fill="none"/></svg>

</div>

</body>
</html>
